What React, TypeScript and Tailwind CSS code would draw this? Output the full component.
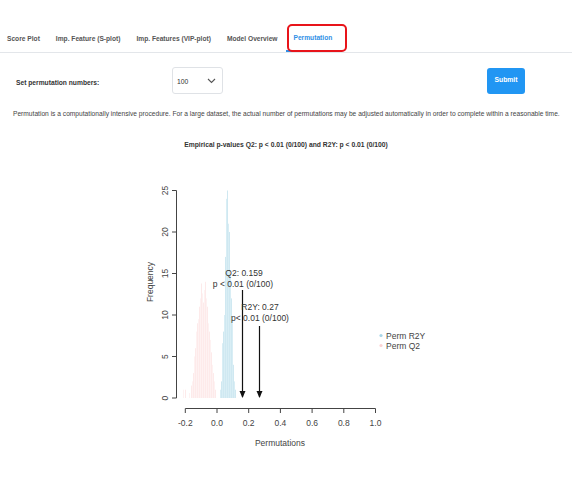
import React from "react";

const blue: [number, number][] = [
  [220, 1], [221, 2], [222, 6.6], [223, 8], [224, 10], [225, 17], [226, 24], [227, 25],
  [228, 21], [229, 20], [230, 15], [231, 12], [232, 9], [233, 4], [234, 2], [235, 1],
];
const pink: [number, number][] = [
  [183, 1], [185, 1], [189, 0.6], [191, 1.5], [192, 2], [193, 3], [194, 5], [195, 6], [196, 8],
  [197, 9], [198, 9.5], [199, 11], [200, 12], [201, 13.8], [202, 12.6], [203, 11.5], [204, 13],
  [205, 14], [206, 12], [207, 11], [208, 9], [209, 8], [210, 7], [211, 5.5], [212, 4], [213, 3],
  [214, 2], [215, 1],
];

const Y0 = 398;
const U = 8.3;

function Chart() {
  const oy = 160;
  const yTicks = [0, 5, 10, 15, 20, 25];
  const xTicks = [-0.2, 0, 0.2, 0.4, 0.6, 0.8, 1.0];
  const xv = (v: number) => 217 + v * 158.5;
  return (
    <svg width={572} height={300} viewBox={`0 ${oy} 572 300`} className="block" style={{ fontFamily: '"Liberation Sans", Arial, sans-serif' }}>
      {pink.map(([x, h], i) => (
        <rect key={"p" + x} x={x} y={Y0 - h * U} width={1} height={h * U} fill={i % 2 ? "#fdeaea" : "#fef2f2"} />
      ))}
      {blue.map(([x, h], i) => (
        <rect key={"b" + x} x={x} y={Y0 - h * U} width={1} height={h * U} fill={i % 2 ? "#cfe8f1" : "#d9eef5"} />
      ))}
      {/* y axis */}
      <line x1={176.5} y1={Y0} x2={176.5} y2={Y0 - 25 * U} stroke="#444" strokeWidth={1} />
      {yTicks.map((t) => (
        <g key={t}>
          <line x1={172} x2={176.5} y1={Y0 - t * U} y2={Y0 - t * U} stroke="#444" />
          <text x={168} y={Y0 - t * U} fontSize={8.5} fill="#444" textAnchor="middle" transform={`rotate(-90 168 ${Y0 - t * U})`}>{t}</text>
        </g>
      ))}
      <text x={153} y={282} fontSize={8.5} fill="#444" textAnchor="middle" transform="rotate(-90 153 282)">Frequency</text>
      {/* x axis */}
      <line x1={xv(-0.2)} x2={xv(1)} y1={408.5} y2={408.5} stroke="#444" />
      {xTicks.map((t) => (
        <g key={t}>
          <line x1={xv(t)} x2={xv(t)} y1={408.5} y2={413} stroke="#444" />
          <text x={xv(t)} y={426} fontSize={8.5} fill="#444" textAnchor="middle">{t.toFixed(1)}</text>
        </g>
      ))}
      <text x={280} y={446} fontSize={8.5} fill="#444" textAnchor="middle">Permutations</text>
      {/* arrows */}
      <line x1={242.5} x2={242.5} y1={290} y2={397} stroke="#111" strokeWidth={1.2} />
      <path d="M239.5 391 L242.5 398 L245.5 391 Z" fill="#111" />
      <line x1={259.5} x2={259.5} y1={326} y2={397} stroke="#111" strokeWidth={1.2} />
      <path d="M256.5 391 L259.5 398 L262.5 391 Z" fill="#111" />
      <text x={244} y={276} fontSize={8.5} fill="#333" textAnchor="middle">Q2: 0.159</text>
      <text x={243} y={287} fontSize={8.5} fill="#333" textAnchor="middle">p &lt; 0.01 (0/100)</text>
      <text x={260} y={310} fontSize={8.5} fill="#333" textAnchor="middle">R2Y: 0.27</text>
      <text x={260} y={321} fontSize={8.5} fill="#333" textAnchor="middle">p&lt; 0.01 (0/100)</text>
      {/* legend */}
      <circle cx={381} cy={335.5} r={1.6} fill="#a9d6e8" />
      <circle cx={381} cy={345.5} r={1.6} fill="#fbd3d3" />
      <text x={386} y={338.5} fontSize={8.5} fill="#444">Perm R2Y</text>
      <text x={386} y={348.5} fontSize={8.5} fill="#444">Perm Q2</text>
    </svg>
  );
}

export default function App() {
  const tabs = ["Score Plot", "Imp. Feature (S-plot)", "Imp. Features (VIP-plot)", "Model Overview"];
  return (
    <div className="w-[572px] h-[500px] bg-white overflow-hidden" style={{ fontFamily: '"Liberation Sans", Arial, sans-serif' }}>
      <div className="flex items-end pt-[26px] border-b border-[#e3e6ea] h-[53px]">
        {tabs.map((t, i) => (
          <div key={t} className={`${i === 0 ? "pl-[7px]" : "pl-[8px]"} pr-[8px] h-[26px] flex items-center text-[6.65px] font-bold text-[#555]`}>{t}</div>
        ))}
        <div className="relative px-[8px] h-[26px] flex items-center text-[6.65px] font-bold text-[#2f8fe6] border-b-2 border-[#2f8fe6]">
          Permutation
          <div className="absolute left-[1px] right-[-7px] top-[-2px] bottom-[-2px] border-2 border-[#e8141a] rounded-[5px]" />
        </div>
      </div>
      <div className="flex items-center h-[27px] mt-[14px] pl-[16px] pr-[47px]">
        <div className="w-[156px] text-[6.7px] font-bold text-[#333] pt-[5px]">Set permutation numbers:</div>
        <div className="w-[51px] h-[27px] border border-[#dfe2e6] rounded-[3px] flex items-center justify-between pl-[4px] pr-[6px]">
          <span className="text-[6.8px] text-[#333] pt-[3px]">100</span>
          <svg width="9" height="6" viewBox="0 0 9 6"><path d="M1 1 L4.5 4.5 L8 1" fill="none" stroke="#555" strokeWidth="1.1" /></svg>
        </div>
        <div className="flex-1" />
        <div className="w-[38px] h-[26px] bg-[#2196f3] rounded-[3px] flex items-center justify-center text-[6.8px] font-bold text-white">Submit</div>
      </div>
      <div className="mt-[16px] pl-[13px] text-[6.65px] text-[#444] whitespace-nowrap leading-[8px]">
        Permutation is a computationally intensive procedure. For a large dataset, the actual number of permutations may be adjusted automatically in order to complete within a reasonable time.
      </div>
      <div className="mt-[23px] text-center text-[6.75px] font-bold text-[#333] leading-[8px]">
        Empirical p-values Q2: p &lt; 0.01 (0/100) and R2Y: p &lt; 0.01 (0/100)
      </div>
      <div className="mt-[11px]">
        <Chart />
      </div>
    </div>
  );
}
